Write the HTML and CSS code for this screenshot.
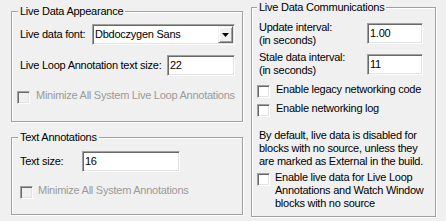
FILE: index.html
```html
<!DOCTYPE html>
<html>
<head>
<meta charset="utf-8">
<link rel="stylesheet" href="styles.css">
</head>
<body>
<div class="dialog">
  <div class="left-col">
    <fieldset class="group group-appearance">
      <legend>Live Data Appearance</legend>
      <div class="row row-font">
        <span class="label">Live data font:</span>
        <div class="combo">
          <span class="combo-text">Dbdoczygen Sans</span>
          <span class="combo-btn"><svg width="7" height="4" viewBox="0 0 7 4"><path d="M0 0H7L3.5 4Z" fill="#000"/></svg></span>
        </div>
      </div>
      <div class="row row-size">
        <span class="label">Live Loop Annotation text size:</span>
        <input class="textbox tb-size" type="text" value="22">
      </div>
      <label class="check check-disabled check-min-live"><input type="checkbox" disabled><span>Minimize All System Live Loop Annotations</span></label>
    </fieldset>
    <fieldset class="group group-text">
      <legend>Text Annotations</legend>
      <div class="row row-textsize">
        <span class="label label-textsize">Text size:</span>
        <input class="textbox tb-textsize" type="text" value="16">
      </div>
      <label class="check check-disabled check-min-text"><input type="checkbox" disabled><span>Minimize All System Annotations</span></label>
    </fieldset>
  </div>
  <fieldset class="group group-comm">
    <legend>Live Data Communications</legend>
    <div class="row row-interval row-update">
      <span class="label">Update interval:<br>(in seconds)</span>
      <input class="textbox tb-interval" type="text" value="1.00">
    </div>
    <div class="row row-interval row-stale">
      <span class="label">Stale data interval:<br>(in seconds)</span>
      <input class="textbox tb-interval" type="text" value="11">
    </div>
    <label class="check check-comm check-legacy"><input type="checkbox"><span>Enable legacy networking code</span></label>
    <label class="check check-comm check-log"><input type="checkbox"><span>Enable networking log</span></label>
    <p class="note">By default, live data is disabled for<br>blocks with no source, unless they<br>are marked as External in the build.</p>
    <label class="check check-comm check-nosource"><input type="checkbox"><span>Enable live data for Live Loop<br>Annotations and Watch Window<br>blocks with no source</span></label>
  </fieldset>
</div>
</body>
</html>
```

FILE: styles.css
```css
html, body {
  margin: 0;
  padding: 0;
}

body {
  width: 446px;
  height: 221px;
  overflow: hidden;
  background: #f0f0f0;
  color: #000;
  font-family: "Liberation Sans", Arial, sans-serif;
  font-size: 11px;
  line-height: 13px;
  letter-spacing: -0.25px;
}

.dialog {
  display: flex;
  align-items: flex-start;
  padding-left: 11px;
}

.left-col {
  display: flex;
  flex-direction: column;
  gap: 9px;
  width: 232px;
  padding-top: 5px;
}

.group {
  box-sizing: border-box;
  margin: 0;
  min-width: 0;
  border: 1px solid #a0a0a0;
  box-shadow: inset 1px 1px 0 #fff, 1px 1px 0 #fff;
}

.group legend {
  padding: 0 2px;
  margin-left: -2px;
  line-height: 13px;
  background: #f0f0f0;
}

.group-appearance {
  height: 117px;
  padding: 6px 7px 0 8px;
}

.group-text {
  height: 84px;
  padding: 7px 7px 0 8px;
}

.group-comm {
  width: 185px;
  height: 216px;
  margin: 1px 0 0 8px;
  padding: 7px 12px 0 7px;
}

.row {
  display: flex;
  align-items: center;
}

.combo,
.textbox,
.check input {
  box-sizing: border-box;
  border: 1px solid;
  border-color: #a0a0a0 #fff #fff #a0a0a0;
  box-shadow: inset 1px 1px 0 #696969, inset -1px -1px 0 #e3e3e3;
  background: #fff;
}

.combo {
  display: flex;
  align-items: center;
  width: 143px;
  height: 21px;
  margin-left: auto;
  padding: 1px;
}

.combo-text {
  padding-left: 1px;
  white-space: nowrap;
}

.combo-btn {
  box-sizing: border-box;
  display: flex;
  align-items: center;
  justify-content: center;
  width: 15px;
  height: 17px;
  margin-left: auto;
  background: #f0f0f0;
  border: 1px solid;
  border-color: #f0f0f0 #696969 #696969 #f0f0f0;
  box-shadow: inset 1px 1px 0 #fff, inset -1px -1px 0 #a0a0a0;
}

.combo-btn svg {
  display: block;
}

.textbox {
  height: 21px;
  margin: 0;
  padding: 0 1px 2px 2px;
  font: inherit;
  line-height: 13px;
  letter-spacing: inherit;
  color: #000;
  outline: none;
}

.row-font {
  height: 21px;
}

.row-size {
  margin-top: 10px;
}

.tb-size {
  width: 68px;
  margin-left: auto;
}

.label-textsize {
  width: 62px;
  flex: none;
}

.tb-textsize {
  width: 98px;
}

.check {
  display: flex;
  align-items: flex-start;
  gap: 6px;
  white-space: nowrap;
}

.check input {
  appearance: none;
  -webkit-appearance: none;
  flex: none;
  width: 13px;
  height: 13px;
  margin: 2px 0 0;
}

.check input:disabled {
  background: #f0f0f0;
}

.check-disabled {
  color: #9a9a9a;
}

.check-min-live {
  margin: 13px 0 0 -3px;
}

.check-min-text {
  margin-top: 12px;
  gap: 5px;
}

.row-interval {
  align-items: flex-start;
}

.row-stale {
  margin-top: 4px;
}

.tb-interval {
  width: 56px;
  margin: 2px 0 0 auto;
}

.row-stale .tb-interval {
  margin-top: 3px;
}

.check-comm {
  margin-left: -2px;
}

.check-legacy {
  margin-top: 6px;
}

.check-log {
  margin-top: 4px;
}

.note {
  margin: 12px 0 0;
  white-space: nowrap;
}

.check-nosource {
  margin-top: 3px;
  gap: 5px;
}
```
